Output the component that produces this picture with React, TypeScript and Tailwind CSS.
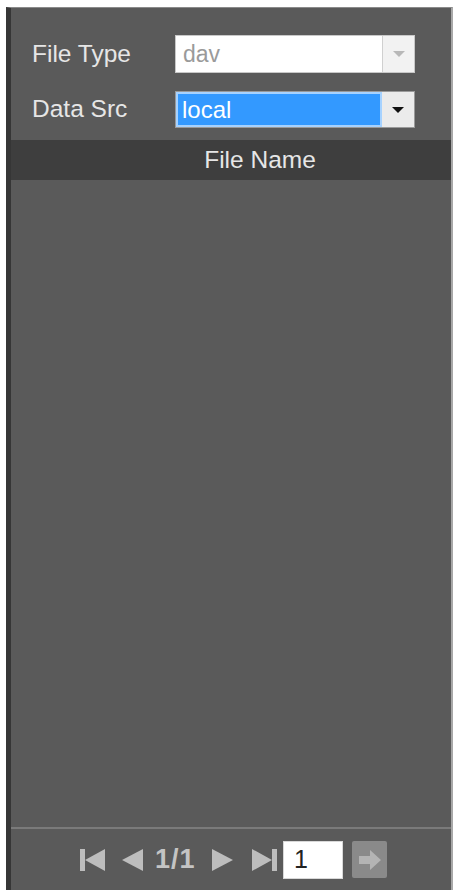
import React from 'react'

const font = { fontFamily: '"Liberation Sans", Arial, sans-serif' }

function Caret({ color }: { color: string }) {
  return (
    <svg width="12" height="8" viewBox="0 0 12 8">
      <path d="M0 1 L12 1 L6 7 Z" fill={color} />
    </svg>
  )
}

function PageIcon({ kind }: { kind: 'first' | 'prev' | 'next' | 'last' }) {
  const c = '#bdbdbd'
  if (kind === 'first')
    return (
      <svg width="25" height="22" viewBox="0 0 25 22">
        <rect x="0" y="0" width="5" height="22" fill={c} />
        <path d="M5 11 L25 0 L25 22 Z" fill={c} />
      </svg>
    )
  if (kind === 'prev')
    return (
      <svg width="21" height="22" viewBox="0 0 21 22">
        <path d="M0 11 L21 0 L21 22 Z" fill={c} />
      </svg>
    )
  if (kind === 'next')
    return (
      <svg width="21" height="22" viewBox="0 0 21 22">
        <path d="M21 11 L0 0 L0 22 Z" fill={c} />
      </svg>
    )
  return (
    <svg width="25" height="22" viewBox="0 0 25 22">
      <path d="M20 11 L0 0 L0 22 Z" fill={c} />
      <rect x="20" y="0" width="5" height="22" fill={c} />
    </svg>
  )
}

export default function App() {
  return (
    <div className="w-[454px] h-[890px] bg-white pt-[7px] pl-[6px] overflow-hidden" style={font}>
      <div className="w-[447px] h-[883px] flex flex-col bg-[#5a5a5a] border-l-[5px] border-l-[#363636] border-r-2 border-r-[#a8a8a8] border-t border-t-[#8a8a8a]">
        {/* File Type */}
        <div className="flex items-center h-[38px] mt-[27px] pl-[21px]">
          <div className="w-[143px] text-[24.5px] text-[#e6e6e6] leading-none">File Type</div>
          <div className="flex w-[240px] h-[38px] border border-[#c8c8c8]">
            <div className="flex-1 bg-white flex items-center pl-[7px] text-[23px] text-[#9a9a9a] leading-none">dav</div>
            <div className="w-[32px] bg-[#f2f2f2] border-l border-[#d0d0d0] flex items-center justify-center">
              <Caret color="#b8b8b8" />
            </div>
          </div>
        </div>

        {/* Data Src */}
        <div className="flex items-center h-[37px] mt-[18px] pl-[21px]">
          <div className="w-[143px] text-[24.5px] text-[#e6e6e6] leading-none">Data Src</div>
          <div className="flex w-[240px] h-[37px] border border-[#9a9a9a] bg-[#e6e6e6]">
            <div className="flex-1 bg-[#3399ff] border-2 border-[#a6d2ff] flex items-center pl-[4px] text-[24px] text-white leading-none">local</div>
            <div className="w-[32px] bg-[#ebebeb] flex items-center justify-center">
              <Caret color="#111111" />
            </div>
          </div>
        </div>

        {/* Header */}
        <div className="mt-[12px] h-[40px] bg-[#3e3e3e] flex items-center justify-center pl-[58px] text-[24.5px] text-[#e6e6e6] leading-none">
          File Name
        </div>

        {/* List body */}
        <div className="flex-1 bg-[#5a5a5a] border-b-2 border-[#7a7a7a]" />

        {/* Pagination */}
        <div className="h-[61px] flex items-center pl-[69px]">
          <PageIcon kind="first" />
          <div className="w-[17px]" />
          <PageIcon kind="prev" />
          <span className="ml-[12px] w-[43px] text-[27px] font-bold tracking-[1px] text-[#c4c4c4] leading-none">1/1</span>
          <div className="w-[14px]" />
          <PageIcon kind="next" />
          <div className="w-[19px]" />
          <PageIcon kind="last" />
          <div className="ml-[6px] w-[60px] h-[38px] bg-white border border-[#d8d8d8] flex items-center pl-[10px] text-[25px] text-[#222] leading-none">
            1
          </div>
          <div className="ml-[9px] w-[35px] h-[37px] bg-[#8a8a8a] rounded-[2px] flex items-center justify-center">
            <svg width="22" height="20" viewBox="0 0 22 20">
              <path d="M0 6 L11 6 L11 0 L22 10 L11 20 L11 14 L0 14 Z" fill="#b4b4b4" />
            </svg>
          </div>
        </div>
      </div>
    </div>
  )
}
